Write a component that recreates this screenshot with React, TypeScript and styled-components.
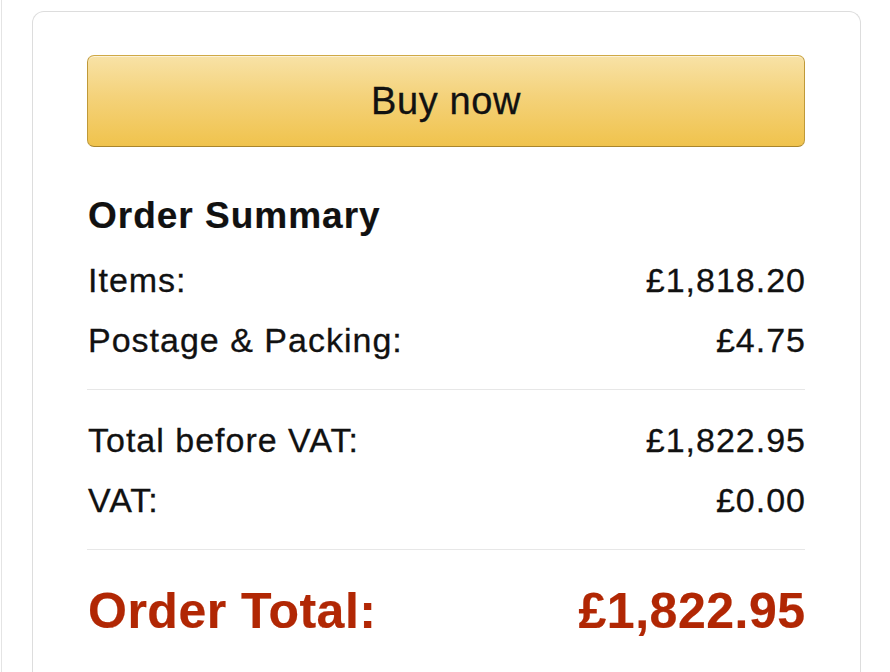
import styled, { createGlobalStyle, css } from 'styled-components'

const GlobalStyle = createGlobalStyle`
  html, body {
    margin: 0;
    padding: 0;
    background: #ffffff;
    overflow: hidden;
  }
  body {
    font-family: 'Liberation Sans', Arial, Helvetica, sans-serif;
    color: #111111;
    -webkit-font-smoothing: antialiased;
  }
`

const Page = styled.div`
  display: flex;
  align-items: flex-start;
  box-sizing: border-box;
  height: 672px;
  padding-top: 11px;
`

const NeighbourEdge = styled.div`
  align-self: stretch;
  margin: -11px 0 0 1px;
  width: 0;
  border-right: 1px solid #e4e4e4;
`

const Card = styled.section`
  box-sizing: border-box;
  width: 829px;
  height: 661px;
  overflow: hidden;
  margin-left: 30px;
  padding: 43px 55px 0 54px;
  border: 1px solid #dddddd;
  border-bottom: 0;
  border-radius: 12px 12px 0 0;
  background: #ffffff;
`

const BuyButton = styled.button`
  display: flex;
  align-items: center;
  justify-content: center;
  box-sizing: border-box;
  width: 100%;
  height: 92px;
  padding: 0;
  border: 1px solid;
  border-color: #cfa946 #bf9938 #a9852c;
  border-radius: 7px;
  background: linear-gradient(to bottom, #f8e2a6 0%, #f4d27a 45%, #f0c34d 100%);
  box-shadow: inset 0 1px 0 rgba(255, 255, 255, 0.55);
  font-family: inherit;
  font-size: 38px;
  letter-spacing: 0.6px;
  color: #111111;
  -webkit-text-stroke: 0.3px #111111;
  cursor: pointer;
`

const Summary = styled.div`
  margin-top: 45px;
  padding-left: 1px;
`

const Heading = styled.h2`
  margin: 0 0 10px;
  font-size: 37px;
  line-height: 48px;
  font-weight: 700;
  letter-spacing: 1px;
  color: #111111;
  -webkit-text-stroke: 0.2px #111111;
`

const SummaryRow = styled.div<{ $total?: boolean }>`
  display: flex;
  justify-content: space-between;
  height: 60px;
  font-size: 34px;
  line-height: 60px;
  letter-spacing: 1px;
  color: #111111;
  -webkit-text-stroke: 0.3px #111111;

  span:last-child {
    margin-right: -1px;
  }

  ${({ $total }) =>
    $total &&
    css`
      height: 70px;
      margin-top: 26px;
      font-size: 50px;
      line-height: 70px;
      font-weight: 700;
      letter-spacing: 0.5px;
      color: #b12704;
      -webkit-text-stroke: 0.2px #b12704;

      span:last-child {
        margin-right: -0.5px;
      }
    `}
`

const Divider = styled.hr`
  height: 1px;
  margin: 19px 0 20px -1px;
  border: 0;
  background: #e7e7e7;
`

const lines = [
  [
    { label: 'Items:', amount: '£1,818.20' },
    { label: 'Postage & Packing:', amount: '£4.75' },
  ],
  [
    { label: 'Total before VAT:', amount: '£1,822.95' },
    { label: 'VAT:', amount: '£0.00' },
  ],
]

export default function App() {
  return (
    <>
      <GlobalStyle />
      <Page>
        <NeighbourEdge />
        <Card>
          <BuyButton type="button">Buy now</BuyButton>
          <Summary>
            <Heading>Order Summary</Heading>
            {lines.map((group, i) => (
              <div key={i}>
                {group.map((line) => (
                  <SummaryRow key={line.label}>
                    <span>{line.label}</span>
                    <span>{line.amount}</span>
                  </SummaryRow>
                ))}
                <Divider />
              </div>
            ))}
            <SummaryRow $total>
              <span>Order Total:</span>
              <span>£1,822.95</span>
            </SummaryRow>
          </Summary>
        </Card>
      </Page>
    </>
  )
}
